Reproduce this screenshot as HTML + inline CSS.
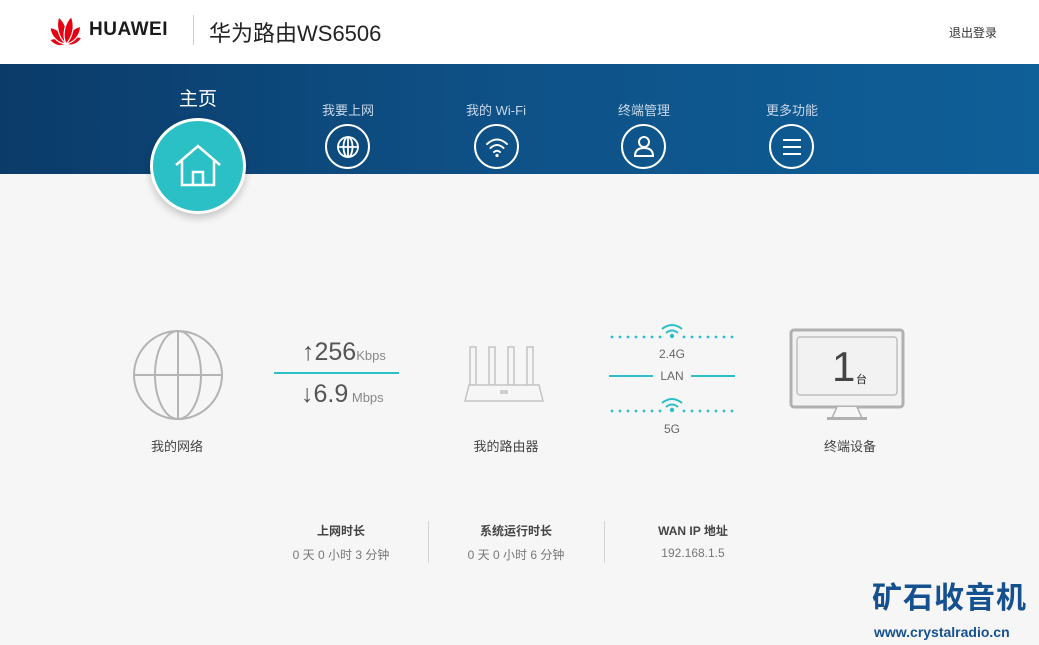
<!DOCTYPE html>
<html><head><meta charset="utf-8"><style>
*{margin:0;padding:0;box-sizing:border-box}
body{width:1039px;height:645px;overflow:hidden;background:#f6f6f6;font-family:"Liberation Sans","Noto Sans CJK SC",sans-serif;position:relative;color:#333}
.a{position:absolute}
.top{left:0;top:0;width:1039px;height:64px;background:#fff}
.nav{left:0;top:64px;width:1039px;height:110px;background:linear-gradient(90deg,#0b3b69 0%,#0e5288 50%,#0f5f98 100%)}
.nl{color:#c9d8e8;font-size:13px;width:120px;text-align:center}
.nc{width:45px;height:45px;border:2px solid #fff;border-radius:50%}
.lbl{font-size:13px;color:#444;width:120px;text-align:center}
.st{width:170px;text-align:center}
.st b{display:block;font-size:12px;color:#444;font-weight:bold}
.st span{display:block;font-size:12px;color:#777;margin-top:7px}
</style></head><body>
<div class="a top"></div>
<svg class="a" style="left:46px;top:14px" width="40" height="32" viewBox="0 0 40 32">
<g fill="#e60012" stroke="#fff" stroke-width="1.2">
<path d="M20 30 C15 26 15 19 19 13 C24 19 24 26 20 30Z" transform="rotate(-72 20 30)"/>
<path d="M20 30 C15 26 15 19 19 13 C24 19 24 26 20 30Z" transform="rotate(72 20 30)"/>
<path d="M20 30 C14 24 14 14 19 7 C25 14 25 24 20 30Z" transform="rotate(-42 20 30)"/>
<path d="M20 30 C14 24 14 14 19 7 C25 14 25 24 20 30Z" transform="rotate(42 20 30)"/>
<path d="M20 30 C14 22 14 10 19 2 C25 10 25 22 20 30Z" transform="rotate(-13 20 30)"/>
<path d="M20 30 C14 22 14 10 19 2 C25 10 25 22 20 30Z" transform="rotate(13 20 30)"/>
</g></svg>
<div class="a" style="left:89px;top:19px;font-size:19px;font-weight:bold;color:#1a1a1a;letter-spacing:0.5px">HUAWEI</div>
<div class="a" style="left:193px;top:15px;width:1px;height:30px;background:#ccc"></div>
<div class="a" style="left:209px;top:16px;font-size:22px;color:#222">华为路由WS6506</div>
<div class="a" style="left:949px;top:24px;font-size:12px;color:#333">退出登录</div>

<div class="a nav"></div>
<div class="a" style="left:158px;top:84px;width:80px;text-align:center;color:#fff;font-size:19px">主页</div>
<div class="a" style="left:150px;top:118px;width:96px;height:96px;border-radius:50%;background:#2bc0c6;border:3px solid #fff;box-shadow:0 4px 8px rgba(0,0,0,.2)"></div>
<svg class="a" style="left:174px;top:144px" width="48" height="44" viewBox="0 0 48 44" fill="none" stroke="#fff" stroke-width="2.5"><path d="M2 21 L24 2 L46 21 M8 16 V41 H40 V16 M19 41 V28 H29 V41"/></svg>

<div class="a nl" style="left:288px;top:100px">我要上网</div>
<div class="a nl" style="left:436px;top:100px">我的 Wi-Fi</div>
<div class="a nl" style="left:584px;top:100px">终端管理</div>
<div class="a nl" style="left:732px;top:100px">更多功能</div>
<div class="a nc" style="left:325px;top:124px"></div>
<div class="a nc" style="left:474px;top:124px"></div>
<div class="a nc" style="left:621px;top:124px"></div>
<div class="a nc" style="left:769px;top:124px"></div>
<svg class="a" style="left:336px;top:135px" width="24" height="24" viewBox="0 0 24 24" fill="none" stroke="#fff" stroke-width="1.8"><circle cx="12" cy="12" r="10"/><ellipse cx="12" cy="12" rx="4.5" ry="10"/><path d="M2 12H22M12 2V22"/></svg>
<svg class="a" style="left:484px;top:134px" width="26" height="26" viewBox="0 0 26 26" fill="none" stroke="#fff" stroke-width="2" stroke-linecap="round"><path d="M3 10 Q13 1 23 10 M6.5 14 Q13 8 19.5 14 M10 18 Q13 15.5 16 18"/><circle cx="13" cy="21.5" r="1.6" fill="#fff" stroke="none"/></svg>
<svg class="a" style="left:632px;top:134px" width="24" height="26" viewBox="0 0 24 26" fill="none" stroke="#fff" stroke-width="2"><circle cx="12" cy="8" r="5"/><path d="M3 22 Q3 14 12 14 Q21 14 21 22 Z"/></svg>
<svg class="a" style="left:780px;top:136px" width="24" height="22" viewBox="0 0 24 22" stroke="#fff" stroke-width="2"><path d="M3 4H21M3 11H21M3 18H21"/></svg>

<svg class="a" style="left:132px;top:329px" width="92" height="92" viewBox="0 0 92 92" fill="none" stroke="#b4b4b4" stroke-width="2"><circle cx="46" cy="46" r="44"/><ellipse cx="46" cy="46" rx="23" ry="44"/><path d="M2 46H90M46 2V90"/></svg>
<div class="a lbl" style="left:117px;top:436px">我的网络</div>

<div class="a" style="left:302px;top:338px;color:#555;font-size:25px">↑256<span style="font-size:13px;color:#888">Kbps</span></div>
<div class="a" style="left:274px;top:372px;width:125px;height:2px;background:#2bc0c6"></div>
<div class="a" style="left:301px;top:380px;color:#555;font-size:25px">↓6.9<span style="font-size:13px;color:#888"> Mbps</span></div>

<svg class="a" style="left:462px;top:345px" width="84" height="58" viewBox="0 0 84 58" fill="#f6f6f6" stroke="#c4c4c4" stroke-width="1.5"><rect x="8" y="2" width="6" height="38"/><rect x="27" y="2" width="6" height="38"/><rect x="46" y="2" width="6" height="38"/><rect x="65" y="2" width="6" height="38"/><path d="M3 56 L7 40 H77 L81 56 Z"/><rect x="39" y="46" width="6" height="2"/></svg>
<div class="a lbl" style="left:446px;top:436px">我的路由器</div>

<svg class="a" style="left:608px;top:320px" width="128" height="100" viewBox="0 0 128 100"><g fill="#2bc0c6">
<g id="d1"><circle cx="4" cy="17" r="1.4"/><circle cx="12" cy="17" r="1.4"/><circle cx="20" cy="17" r="1.4"/><circle cx="28" cy="17" r="1.4"/><circle cx="36" cy="17" r="1.4"/><circle cx="44" cy="17" r="1.4"/><circle cx="52" cy="17" r="1.4"/><circle cx="76" cy="17" r="1.4"/><circle cx="84" cy="17" r="1.4"/><circle cx="92" cy="17" r="1.4"/><circle cx="100" cy="17" r="1.4"/><circle cx="108" cy="17" r="1.4"/><circle cx="116" cy="17" r="1.4"/><circle cx="124" cy="17" r="1.4"/></g>
<circle cx="64" cy="16" r="2.2"/>
<use href="#d1" y="74"/><circle cx="64" cy="90" r="2.2"/>
<rect x="1" y="55" width="44" height="2"/><rect x="83" y="55" width="44" height="2"/>
</g><g fill="none" stroke="#2bc0c6" stroke-width="2"><path d="M54 9 Q64 1 74 9 M58 13 Q64 8 70 13"/><path d="M54 83 Q64 75 74 83 M58 87 Q64 82 70 87"/></g></svg>
<div class="a" style="left:642px;top:347px;width:60px;text-align:center;font-size:12px;color:#666">2.4G</div>
<div class="a" style="left:642px;top:369px;width:60px;text-align:center;font-size:12px;color:#666">LAN</div>
<div class="a" style="left:642px;top:422px;width:60px;text-align:center;font-size:12px;color:#666">5G</div>

<svg class="a" style="left:789px;top:328px" width="116" height="92" viewBox="0 0 116 92"><rect x="2" y="2" width="112" height="77" rx="3" fill="#f2f2f2" stroke="#b0b0b0" stroke-width="3"/><rect x="8" y="9" width="100" height="58" rx="3" fill="#f2f2f2" stroke="#b4b4b4" stroke-width="1.2"/><path d="M48 79 L43 90 H73 L68 79" fill="#f6f6f6" stroke="#b0b0b0" stroke-width="1.5"/><rect x="38" y="89" width="40" height="3" fill="#b0b0b0"/></svg>
<div class="a" style="left:832px;top:343px;font-size:42px;color:#444;line-height:48px">1</div>
<div class="a" style="left:856px;top:371px;font-size:11px;color:#222">台</div>
<div class="a lbl" style="left:790px;top:436px">终端设备</div>

<div class="a st" style="left:256px;top:522px"><b>上网时长</b><span>0 天 0 小时 3 分钟</span></div>
<div class="a" style="left:428px;top:521px;width:1px;height:42px;background:#d4d4d4"></div>
<div class="a st" style="left:431px;top:522px"><b>系统运行时长</b><span>0 天 0 小时 6 分钟</span></div>
<div class="a" style="left:604px;top:521px;width:1px;height:42px;background:#d4d4d4"></div>
<div class="a st" style="left:608px;top:522px"><b>WAN IP 地址</b><span>192.168.1.5</span></div>

<div class="a" style="left:872px;top:583px;font-size:30px;font-weight:bold;color:#15508f;letter-spacing:1px;line-height:32px">矿石收音机</div>
<div class="a" style="left:874px;top:624px;font-size:14px;font-weight:bold;color:#15508f">www.crystalradio.cn</div>
</body></html>
